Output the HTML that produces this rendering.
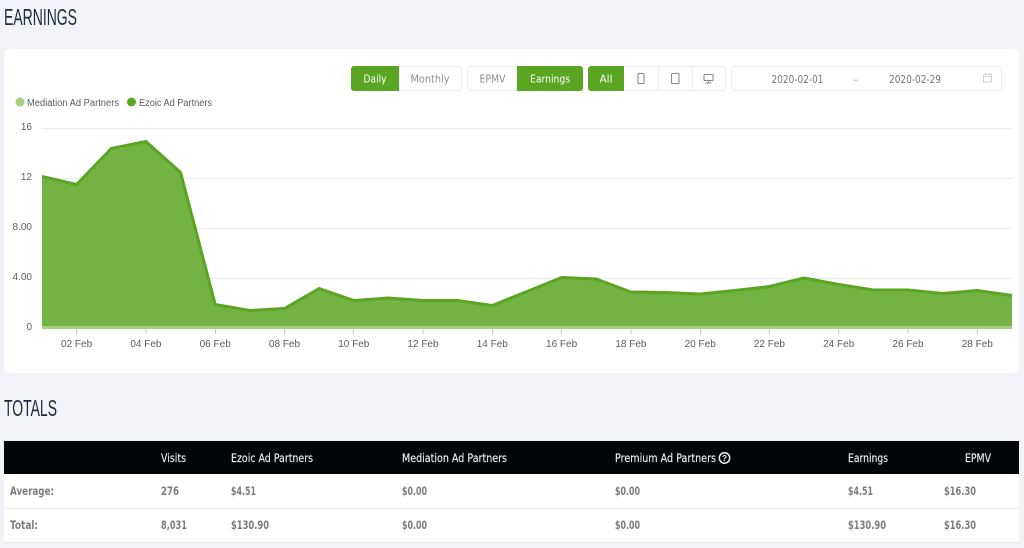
<!DOCTYPE html>
<html lang="en">
<head>
<meta charset="utf-8">
<title>Earnings</title>
<style>
html,body{margin:0;padding:0;background:#f1f3f8;width:1024px;height:548px;overflow:hidden}
svg{display:block}
text{font-family:"Liberation Sans",sans-serif}
.ax{font-size:10px;fill:#5c5c5c}
.btn{font-family:"DejaVu Sans",sans-serif;font-size:11px}
.date{font-family:"DejaVu Sans",sans-serif;font-size:11px}
.th{font-family:"DejaVu Sans",sans-serif;font-size:11.500px;fill:#eee;stroke:#eee;stroke-width:.15}
.td{font-family:"DejaVu Sans",sans-serif;font-size:11.500px;font-weight:bold;fill:#7b7b7b}
.title{font-size:23px;fill:#1f2b3a}
.ic{fill:none;stroke:#8a8a8a;stroke-width:1.1}
</style>
</head>
<body>
<svg width="1024" height="548" viewBox="0 0 1024 548" xmlns="http://www.w3.org/2000/svg">
<text class="title" x="4" y="25" textLength="73" lengthAdjust="spacingAndGlyphs">EARNINGS</text>

<rect x="4" y="49" width="1015" height="324" rx="5" fill="#fff"/>

<!-- controls -->
<rect x="399.500" y="66.500" width="62" height="24" rx="3" fill="#fff" stroke="#e9edf4"/>
<path d="M354 66h45v25h-45a3 3 0 0 1-3-3v-19a3 3 0 0 1 3-3z" fill="#5aa522"/>
<text class="btn" x="363.500" y="82.500" textLength="23" lengthAdjust="spacingAndGlyphs" fill="#fff">Daily</text>
<text class="btn" x="410.500" y="82.500" textLength="39" lengthAdjust="spacingAndGlyphs" fill="#8d8d8d">Monthly</text>

<rect x="467.500" y="66.500" width="114" height="24" rx="3" fill="#fff" stroke="#e9edf4"/>
<path d="M517 66h63a3 3 0 0 1 3 3v19a3 3 0 0 1-3 3h-63z" fill="#5aa522"/>
<text class="btn" x="479.500" y="82.500" textLength="26" lengthAdjust="spacingAndGlyphs" fill="#8d8d8d">EPMV</text>
<text class="btn" x="530" y="82.500" textLength="40" lengthAdjust="spacingAndGlyphs" fill="#fff">Earnings</text>

<rect x="588.500" y="66.500" width="137" height="24" rx="3" fill="#fff" stroke="#e9edf4"/>
<path d="M591 66h33v25h-33a3 3 0 0 1-3-3v-19a3 3 0 0 1 3-3z" fill="#5aa522"/>
<text class="btn" x="599.500" y="82.500" textLength="13" lengthAdjust="spacingAndGlyphs" fill="#fff">All</text>
<path d="M658.500 67v23M692.500 67v23" stroke="#e9edf4" fill="none"/>
<rect class="ic" x="638" y="73.500" width="6" height="10" rx="1"/>
<rect class="ic" x="671.500" y="73.500" width="7.500" height="10" rx="1"/>
<rect class="ic" x="704" y="74.500" width="9" height="6" rx=".8"/>
<path class="ic" d="M708.500 80.500v2M705.500 83h6"/>

<rect x="731.500" y="66.500" width="270" height="24" rx="3" fill="#fff" stroke="#e9edf4"/>
<text class="date" x="771.500" y="83" textLength="52" lengthAdjust="spacingAndGlyphs" fill="#757575">2020-02-01</text>
<text class="date" x="853" y="83" fill="#aaa">–</text>
<text class="date" x="889" y="83" textLength="52" lengthAdjust="spacingAndGlyphs" fill="#757575">2020-02-29</text>
<rect x="983.500" y="74.500" width="8" height="7.500" rx=".8" fill="none" stroke="#cfcfcf"/>
<path d="M983.500 76.500h8M985.500 73v2M989.500 73v2" stroke="#cfcfcf" fill="none"/>

<!-- legend -->
<circle cx="20" cy="102" r="4.500" fill="#a4d07f"/>
<text class="ax" x="27" y="106" textLength="92" lengthAdjust="spacingAndGlyphs">Mediation Ad Partners</text>
<circle cx="131.500" cy="102" r="4.500" fill="#5aa522"/>
<text class="ax" x="139" y="106" textLength="73" lengthAdjust="spacingAndGlyphs">Ezoic Ad Partners</text>

<!-- grid -->
<path d="M42 128.500h970M42 178.500h970M42 228.500h970M42 278.500h970" stroke="#ececec" fill="none"/>
<text class="ax" x="32" y="130" text-anchor="end">16</text>
<text class="ax" x="32" y="180" text-anchor="end">12</text>
<text class="ax" x="32" y="230" text-anchor="end">8.00</text>
<text class="ax" x="32" y="280" text-anchor="end">4.00</text>
<text class="ax" x="32" y="330" text-anchor="end">0</text>

<!-- area -->
<g transform="translate(0,.5)">
<path fill="#74b244" d="M42 176L76.600 184L111.300 148L145.900 141L180.600 172L215.200 304L249.800 310L284.500 308L319.100 288L353.800 300L388.400 297.500L423 300L457.700 300L492.300 305L527 291L561.600 277L596.200 278.500L630.900 291.500L665.500 292L700.200 293.500L734.800 290L769.400 286L804.100 277.500L838.700 284L873.400 289.500L908 289.500L942.600 293L977.300 290L1012 295V326H42Z"/>
<path fill="none" stroke="#5aa522" stroke-width="3" stroke-linejoin="round" d="M42 176L76.600 184L111.300 148L145.900 141L180.600 172L215.200 304L249.800 310L284.500 308L319.100 288L353.800 300L388.400 297.500L423 300L457.700 300L492.300 305L527 291L561.600 277L596.200 278.500L630.900 291.500L665.500 292L700.200 293.500L734.800 290L769.400 286L804.100 277.500L838.700 284L873.400 289.500L908 289.500L942.600 293L977.300 290L1012 295"/>
</g>
<rect x="42" y="326" width="970" height="3" fill="#a4d07f"/>

<!-- x axis -->
<path d="M76.500 329v5M146 329v5M215.500 329v5M284.500 329v5M353.500 329v5M423 329v5M492.500 329v5M561.500 329v5M631 329v5M700.500 329v5M769.500 329v5M838.500 329v5M908 329v5M977.500 329v5" stroke="#c8c8c8" fill="none"/>
<g text-anchor="middle">
<text class="ax" x="76.600" y="347">02 Feb</text>
<text class="ax" x="145.900" y="347">04 Feb</text>
<text class="ax" x="215.200" y="347">06 Feb</text>
<text class="ax" x="284.500" y="347">08 Feb</text>
<text class="ax" x="353.800" y="347">10 Feb</text>
<text class="ax" x="423" y="347">12 Feb</text>
<text class="ax" x="492.300" y="347">14 Feb</text>
<text class="ax" x="561.600" y="347">16 Feb</text>
<text class="ax" x="630.900" y="347">18 Feb</text>
<text class="ax" x="700.200" y="347">20 Feb</text>
<text class="ax" x="769.400" y="347">22 Feb</text>
<text class="ax" x="838.700" y="347">24 Feb</text>
<text class="ax" x="908" y="347">26 Feb</text>
<text class="ax" x="977.300" y="347">28 Feb</text>
</g>

<text class="title" x="4" y="416" textLength="53" lengthAdjust="spacingAndGlyphs">TOTALS</text>

<!-- table -->
<rect x="4" y="441" width="1015" height="33" fill="#010508"/>
<rect x="4" y="474" width="1015" height="68" fill="#fff"/>
<path d="M4 508.500h1015" stroke="#ebebeb" fill="none"/>
<path d="M4 542.500h1015" stroke="#e6e8ee" fill="none"/>

<text class="th" x="161" y="462" textLength="25" lengthAdjust="spacingAndGlyphs">Visits</text>
<text class="th" x="231" y="462" textLength="82" lengthAdjust="spacingAndGlyphs">Ezoic Ad Partners</text>
<text class="th" x="402" y="462" textLength="105" lengthAdjust="spacingAndGlyphs">Mediation Ad Partners</text>
<text class="th" x="615" y="462" textLength="101" lengthAdjust="spacingAndGlyphs">Premium Ad Partners</text>
<circle cx="724.500" cy="458" r="5.200" fill="none" stroke="#eee" stroke-width="1.500"/>
<text x="724.500" y="461" text-anchor="middle" font-size="8.500" font-weight="bold" fill="#eee">?</text>
<text class="th" x="848" y="462" textLength="40" lengthAdjust="spacingAndGlyphs">Earnings</text>
<text class="th" x="965" y="462" textLength="26" lengthAdjust="spacingAndGlyphs">EPMV</text>

<text class="td" x="10" y="495" textLength="44" lengthAdjust="spacingAndGlyphs">Average:</text>
<text class="td" x="161" y="495" textLength="18" lengthAdjust="spacingAndGlyphs">276</text>
<text class="td" x="231" y="495" textLength="25" lengthAdjust="spacingAndGlyphs">$4.51</text>
<text class="td" x="402" y="495" textLength="25" lengthAdjust="spacingAndGlyphs">$0.00</text>
<text class="td" x="615" y="495" textLength="25" lengthAdjust="spacingAndGlyphs">$0.00</text>
<text class="td" x="848" y="495" textLength="25" lengthAdjust="spacingAndGlyphs">$4.51</text>
<text class="td" x="944" y="495" textLength="32" lengthAdjust="spacingAndGlyphs">$16.30</text>

<text class="td" x="10" y="529" textLength="28" lengthAdjust="spacingAndGlyphs">Total:</text>
<text class="td" x="161" y="529" textLength="26" lengthAdjust="spacingAndGlyphs">8,031</text>
<text class="td" x="231" y="529" textLength="38" lengthAdjust="spacingAndGlyphs">$130.90</text>
<text class="td" x="402" y="529" textLength="25" lengthAdjust="spacingAndGlyphs">$0.00</text>
<text class="td" x="615" y="529" textLength="25" lengthAdjust="spacingAndGlyphs">$0.00</text>
<text class="td" x="848" y="529" textLength="38" lengthAdjust="spacingAndGlyphs">$130.90</text>
<text class="td" x="944" y="529" textLength="32" lengthAdjust="spacingAndGlyphs">$16.30</text>
</svg>
</body>
</html>
